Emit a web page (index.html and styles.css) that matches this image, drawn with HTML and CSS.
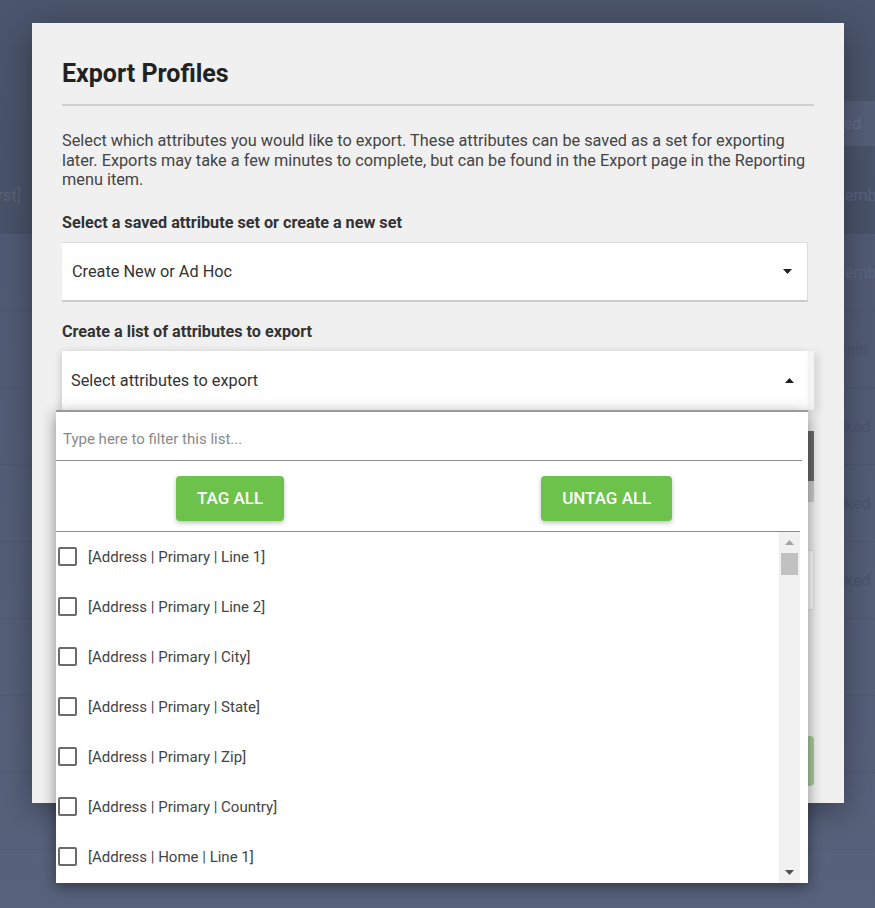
FILE: index.html
```html
<!DOCTYPE html>
<html lang="en">
<head>
<meta charset="utf-8">
<title>Export Profiles</title>
<link rel="stylesheet" href="styles.css">
</head>
<body>
<div class="app">
  <div class="app-top">
    <div class="toolbar"><div class="search">Saved</div></div>
    <div class="thead">
      <div class="th-left"><span>[Name | First]</span></div>
      <div class="th-right">Member</div>
    </div>
  </div>
  <div class="tbody">
    <div class="tr"><span class="td-light">Member</span></div>
    <div class="tr"><span class="td-admin">Admin</span></div>
    <div class="tr"><span class="td-lock">Locked</span></div>
    <div class="tr"><span class="td-lock">Locked</span></div>
    <div class="tr"><span class="td-lock">Locked</span></div>
    <div class="tr"></div>
    <div class="tr"></div>
    <div class="tr"></div>
  </div>
</div>

<div class="modal">
  <h1 class="modal-title">Export Profiles</h1>
  <div class="divider"></div>
  <p class="desc">Select which attributes you would like to export. These attributes can be saved as a set for exporting later. Exports may take a few minutes to complete, but can be found in the Export page in the Reporting menu item.</p>

  <div class="label">Select a saved attribute set or create a new set</div>
  <div class="select">
    <span>Create New or Ad Hoc</span>
    <svg class="caret" width="9" height="5" viewBox="0 0 9 5"><path d="M0 0H9L4.5 5Z" fill="#222"/></svg>
  </div>

  <div class="label label-2">Create a list of attributes to export</div>
  <div class="multi">
    <div class="multi-field">
      <span>Select attributes to export</span>
      <svg class="caret" width="9" height="5" viewBox="0 0 9 5"><path d="M0 5H9L4.5 0Z" fill="#222"/></svg>
    </div>
    <div class="multi-strip"></div>

    <div class="panel">
      <div class="filter">Type here to filter this list...</div>
      <div class="actions">
        <button class="btn">TAG ALL</button>
        <button class="btn">UNTAG ALL</button>
      </div>
      <div class="list-wrap">
        <ul class="list">
          <li class="item"><span class="check"></span><span>[Address | Primary | Line 1]</span></li>
          <li class="item"><span class="check"></span><span>[Address | Primary | Line 2]</span></li>
          <li class="item"><span class="check"></span><span>[Address | Primary | City]</span></li>
          <li class="item"><span class="check"></span><span>[Address | Primary | State]</span></li>
          <li class="item"><span class="check"></span><span>[Address | Primary | Zip]</span></li>
          <li class="item"><span class="check"></span><span>[Address | Primary | Country]</span></li>
          <li class="item"><span class="check"></span><span>[Address | Home | Line 1]</span></li>
          <li class="item"><span class="check"></span><span>[Address | Home | Line 2]</span></li>
          <li class="item"><span class="check"></span><span>[Address | Home | City]</span></li>
        </ul>
        <div class="vscroll">
          <div class="sb-btn"><svg width="9" height="5" viewBox="0 0 9 5"><path d="M0 5H9L4.5 0Z" fill="#a3a3a3"/></svg></div>
          <div class="sb-thumb"></div>
          <div class="sb-track"></div>
          <div class="sb-btn"><svg width="9" height="5" viewBox="0 0 9 5"><path d="M0 0H9L4.5 5Z" fill="#505050"/></svg></div>
        </div>
      </div>
    </div>
  </div>

  <div class="chosen"></div>
  <div class="textbox"></div>
  <div class="footer"><div class="btn-export"></div></div>
</div>
</body>
</html>
```

FILE: styles.css
```css
* { box-sizing: border-box; }

body {
  margin: 0;
  width: 875px;
  height: 908px;
  overflow: hidden;
  position: relative;
  background: #525d76;
  font-family: Roboto, "Liberation Sans", Arial, sans-serif;
}

/* ---------- background application (behind overlay) ---------- */
.app {
  height: 908px;
  display: flex;
  flex-direction: column;
  font-size: 16px;
}
.app-top {
  height: 234px;
  background: linear-gradient(180deg, #4b556b 0%, #485268 100%);
  display: flex;
  flex-direction: column;
}
.toolbar {
  margin-top: 101px;
  height: 45px;
  display: flex;
  justify-content: flex-end;
}
.search {
  width: 300px;
  background: #545e76;
  color: #636d86;
  display: flex;
  align-items: center;
  padding-left: 243px;
}
.thead {
  flex: 1;
  display: flex;
  align-items: center;
  justify-content: space-between;
  padding-top: 10px;
  color: #58627c;
}
.th-left {
  width: 21px;
  overflow: hidden;
  display: flex;
  justify-content: flex-end;
  white-space: nowrap;
}
.th-left span { flex-shrink: 0; }
.th-right { width: 44px; white-space: nowrap; overflow: hidden; }

.tbody {
  flex: 1;
  background: linear-gradient(180deg, #505a72 0%, #57627c 100%);
}
.tr {
  height: 77px;
  border-bottom: 1px solid rgba(0, 0, 0, 0.05);
  display: flex;
  align-items: center;
  white-space: nowrap;
  overflow: hidden;
}
.td-light { margin-left: 831px; color: #5a6580; }
.td-admin { margin-left: 822px; color: #4a546c; }
.td-lock { margin-left: 819px; color: #4a546c; }

/* ---------- modal ---------- */
.modal {
  position: absolute;
  left: 32px;
  top: 23px;
  width: 812px;
  height: 780px;
  padding: 37px 30px 0;
  background: #f0f0f0;
  box-shadow: 0 8px 30px rgba(0, 0, 0, 0.35);
}
.modal-title {
  margin: 0;
  font-size: 25px;
  line-height: 28px;
  font-weight: 700;
  color: #222;
}
.divider {
  height: 2px;
  margin-top: 16px;
  background: #cfcfcf;
}
.desc {
  margin: 25px 0 0;
  font-size: 16.3px;
  line-height: 19.5px;
  color: #444;
}
.label {
  margin-top: 23px;
  font-size: 16.2px;
  line-height: 20px;
  font-weight: 700;
  color: #333;
}
.label-2 { margin-top: 20px; }

.select {
  margin-top: 9px;
  width: 746px;
  height: 60px;
  background: #fff;
  border-top: 1px solid #dcdcdc;
  border-right: 1px solid #dcdcdc;
  border-bottom: 2px solid #cbcbcb;
  display: flex;
  align-items: center;
  justify-content: space-between;
  padding: 0 15px 0 10px;
  font-size: 16.3px;
  color: #333;
}
.caret { display: block; }

.multi {
  position: relative;
  z-index: 2;
  margin-top: 9px;
  width: 752px;
  height: 59px;
  display: flex;
}
.multi-field {
  flex: 1;
  background: #fff;
  display: flex;
  align-items: center;
  justify-content: space-between;
  padding: 0 14px 0 9px;
  font-size: 16.3px;
  color: #333;
  box-shadow: 0 2px 8px rgba(0, 0, 0, 0.22);
}
.multi-strip {
  width: 6px;
  background: #f4f4f4;
  box-shadow: 4px 2px 8px rgba(0, 0, 0, 0.15);
}

/* dropdown panel */
.panel {
  position: absolute;
  top: 59px;
  left: -6px;
  width: 752px;
  height: 473px;
  background: #fff;
  border-top: 2px solid #9a9a9a;
  padding-right: 6px;
  display: flex;
  flex-direction: column;
  box-shadow: 0 4px 14px rgba(0, 0, 0, 0.45);
}
.filter {
  height: 49px;
  padding: 17px 0 0 7px;
  font-size: 15px;
  line-height: 20px;
  color: #8a8a8a;
  border-bottom: 1px solid #8c8c8c;
}
.actions {
  height: 71px;
  margin-right: 2px;
  padding: 15px 0 0 120px;
  display: flex;
  align-items: flex-start;
  gap: 257px;
  border-bottom: 1px solid #8c8c8c;
}
.btn {
  height: 45px;
  padding: 0 21px;
  border: 0;
  border-radius: 4px;
  background: #6cc24a;
  color: #fff;
  font-family: Roboto, "Liberation Sans", Arial, sans-serif;
  font-size: 17px;
  font-weight: 500;
  box-shadow: 0 2px 4px rgba(0, 0, 0, 0.25);
}

.list-wrap {
  flex: 1;
  margin-right: 2px;
  display: flex;
  overflow: hidden;
}
.list {
  flex: 1;
  margin: 0;
  padding: 0;
  list-style: none;
  overflow: hidden;
}
.item {
  height: 50px;
  display: flex;
  align-items: center;
  gap: 11px;
  padding-left: 2px;
  font-size: 15px;
  color: #444;
}
.check {
  width: 19px;
  height: 19px;
  border: 2px solid #6b6b6b;
  border-radius: 2px;
  flex-shrink: 0;
}
.vscroll {
  width: 21px;
  background: #f1f1f1;
  display: flex;
  flex-direction: column;
}
.sb-btn {
  height: 21px;
  display: flex;
  align-items: center;
  justify-content: center;
}
.sb-thumb {
  height: 22px;
  margin: 0 2px;
  background: #c1c1c1;
}
.sb-track { flex: 1; }

/* content hidden behind the dropdown */
.chosen {
  margin-top: 21px;
  height: 71px;
  background: linear-gradient(180deg, #6b6b6b 0 50px, #cbcbcb 50px);
}
.textbox {
  margin-top: 48px;
  height: 60px;
  background: #fff;
  border: 1px solid #e2e2e2;
}
.footer {
  margin-top: 126px;
  display: flex;
  justify-content: flex-end;
}
.btn-export {
  width: 120px;
  height: 50px;
  border-radius: 4px;
  background: #a9cb9a;
}
```
